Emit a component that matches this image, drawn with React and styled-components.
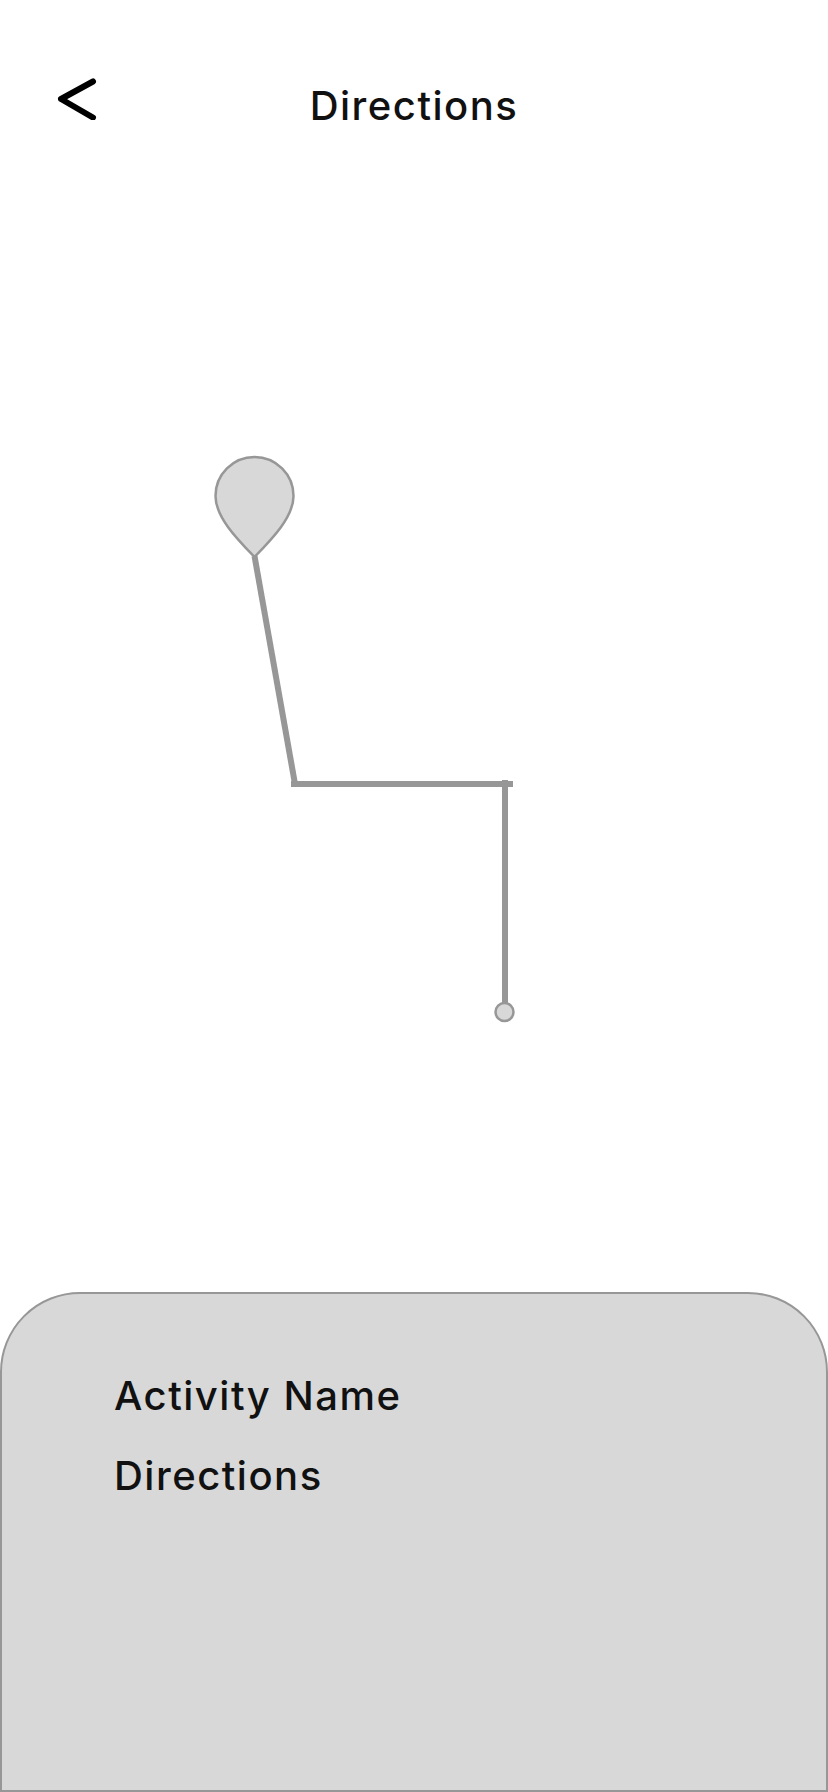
import React from 'react';
import styled, { createGlobalStyle } from 'styled-components';

const GlobalStyle = createGlobalStyle`
  html, body {
    margin: 0;
    padding: 0;
    background: #fff;
  }
`;

const Screen = styled.div`
  width: 828px;
  height: 1792px;
  display: flex;
  flex-direction: column;
  overflow: hidden;
  background: #fff;
  font-family: Inter, "Noto Sans", sans-serif;
  color: #111;
`;

const Header = styled.header`
  height: 140px;
  flex: none;
  display: grid;
  grid-template-columns: 1fr auto 1fr;
  align-items: start;
  padding: 78px 0 0 56px;
  box-sizing: border-box;
`;

const BackButton = styled.button`
  width: 42px;
  height: 42px;
  padding: 0;
  border: none;
  background: none;
  justify-self: start;
  svg {
    display: block;
  }
`;

const Title = styled.h1`
  margin: 5px 56px 0 0;
  font-size: 40px;
  line-height: 46px;
  font-weight: 500;
  letter-spacing: 1.5px;
`;

const MapArea = styled.svg`
  display: block;
  flex: 1;
  width: 828px;
  min-height: 0;
`;

const Sheet = styled.section`
  flex: none;
  height: 500px;
  box-sizing: border-box;
  border: 2px solid #979797;
  border-radius: 80px 80px 0 0;
  background: #d8d8d8;
  padding: 79px 0 0 112px;
  display: flex;
  flex-direction: column;
  gap: 34px;
`;

const SheetLine = styled.p`
  margin: 0;
  font-size: 40px;
  line-height: 46px;
  font-weight: 500;
  letter-spacing: 1.5px;
`;

const BackIcon = () => (
  <svg width="42" height="42" viewBox="0 0 42 42" fill="none">
    <path d="M37 3.500 L5 21 L37 39.500" stroke="#000" strokeWidth="6" strokeLinecap="round" strokeLinejoin="round" />
  </svg>
);

const App = () => (
  <Screen>
    <GlobalStyle />
    <Header>
      <BackButton aria-label="Back">
        <BackIcon />
      </BackButton>
      <Title>Directions</Title>
    </Header>
    <MapArea viewBox="0 140 828 1152">
      <path d="M254.500 556 L295 784" stroke="#979797" strokeWidth="6" fill="none" />
      <path d="M291 784 H513" stroke="#979797" strokeWidth="6" fill="none" />
      <path d="M505 780 V1003" stroke="#979797" strokeWidth="6" fill="none" />
      <path
        d="M254.500 557 C237 539 215.500 517 215.500 496 A39 39 0 0 1 293.500 496 C293.500 517 272 539 254.500 557 Z"
        fill="#d8d8d8"
        stroke="#979797"
        strokeWidth="2.5"
      />
      <circle cx="504.500" cy="1012" r="9" fill="#d8d8d8" stroke="#979797" strokeWidth="2.5" />
    </MapArea>
    <Sheet>
      <SheetLine>Activity Name</SheetLine>
      <SheetLine>Directions</SheetLine>
    </Sheet>
  </Screen>
);

export default App;
